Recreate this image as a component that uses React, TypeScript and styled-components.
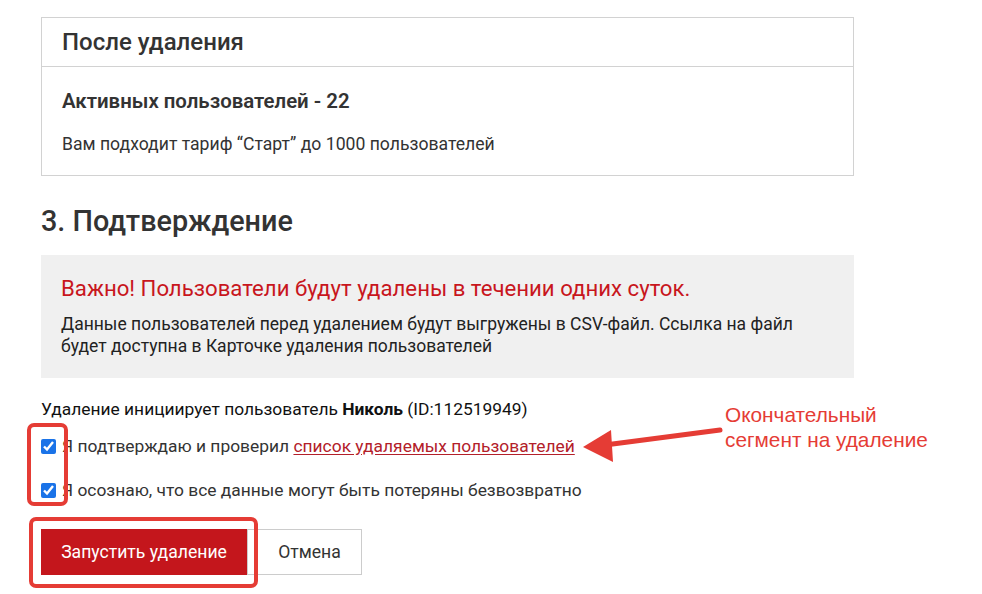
import React from "react";
import styled, { createGlobalStyle } from "styled-components";

const Global = createGlobalStyle`
  html, body { margin: 0; padding: 0; background: #fff; }
  body { font-family: Roboto, "Noto Sans", Arial, sans-serif; color: #333; }
  * { box-sizing: border-box; }
`;

const Page = styled.div`
  position: relative;
  width: 982px;
  height: 594px;
  overflow: hidden;
  padding: 17px 0 0 41px;
`;

const Content = styled.div`
  width: 813px;
  display: flex;
  flex-direction: column;
`;

const Card = styled.section`
  border: 1px solid #d2d2d2;
  display: flex;
  flex-direction: column;
`;

const CardHeader = styled.div`
  height: 49px;
  padding: 0 20px;
  display: flex;
  align-items: center;
  border-bottom: 1px solid #d2d2d2;
  font-size: 24px;
  font-weight: 500;
  color: #333;
`;

const CardBody = styled.div`
  padding: 22px 20px 20px;
  display: flex;
  flex-direction: column;
  gap: 20px;
`;

const CardTitle = styled.div`
  font-size: 20.4px;
  line-height: 24px;
  font-weight: 600;
  color: #333;
`;

const CardText = styled.div`
  font-size: 17.6px;
  line-height: 22px;
  color: #333;
`;

const SectionTitle = styled.h2`
  margin: 29px 0 0;
  font-size: 28.8px;
  line-height: 32px;
  font-weight: 500;
  color: #333;
`;

const Notice = styled.div`
  margin-top: 18px;
  background: #f0f0f0;
  padding: 19px 20px 21px;
  display: flex;
  flex-direction: column;
  gap: 11px;
`;

const NoticeTitle = styled.div`
  font-size: 22.2px;
  line-height: 28px;
  color: #c8161d;
`;

const NoticeText = styled.div`
  font-size: 17.5px;
  line-height: 22px;
  color: #222;
`;

const Initiator = styled.div`
  margin-top: 20px;
  font-size: 17.4px;
  line-height: 22px;
  color: #111;
  b { font-weight: 700; }
`;

const Checks = styled.div`
  margin-top: 15px;
  display: flex;
  flex-direction: column;
  gap: 22px;
`;

const CheckRow = styled.label`
  display: flex;
  align-items: center;
  gap: 6px;
  height: 22px;
  font-size: 17.4px;
  color: #333;
`;

const Box = styled.input`
  width: 15px;
  height: 15px;
  margin: 0;
  accent-color: #1a73e8;
`;

const Link = styled.a`
  color: #b3202a;
  text-decoration: underline;
  text-underline-offset: 2px;
`;

const Buttons = styled.div`
  margin-top: 28px;
  display: flex;
`;

const Button = styled.button<{ $primary?: boolean }>`
  height: 46px;
  width: ${(p) => (p.$primary ? "206px" : "115px")};
  padding: ${(p) => (p.$primary ? "0" : "0 0 0 10px")};
  font-family: Roboto, Arial, sans-serif;
  font-size: 17.6px;
  border: ${(p) => (p.$primary ? "none" : "1px solid #cccccc")};
  background: ${(p) => (p.$primary ? "#c4161c" : "#fff")};
  color: ${(p) => (p.$primary ? "#fff" : "#333")};
  cursor: pointer;
`;

const Highlight = styled.div<{ $x: number; $y: number; $w: number; $h: number }>`
  position: absolute;
  left: ${(p) => p.$x}px;
  top: ${(p) => p.$y}px;
  width: ${(p) => p.$w}px;
  height: ${(p) => p.$h}px;
  border: 4px solid #e53c35;
  border-radius: 7px;
  pointer-events: none;
`;

const Note = styled.div`
  position: absolute;
  left: 725px;
  top: 402px;
  font-family: "Liberation Sans", Arial, sans-serif;
  font-size: 20.8px;
  line-height: 25px;
  color: #e53c35;
`;

const ArrowSvg = styled.svg`
  position: absolute;
  left: 575px;
  top: 415px;
  pointer-events: none;
`;

export default function App() {
  return (
    <Page>
      <Global />
      <Content>
        <Card>
          <CardHeader>После удаления</CardHeader>
          <CardBody>
            <CardTitle>Активных пользователей - 22</CardTitle>
            <CardText>Вам подходит тариф “Старт” до 1000 пользователей</CardText>
          </CardBody>
        </Card>

        <SectionTitle>3. Подтверждение</SectionTitle>

        <Notice>
          <NoticeTitle>Важно! Пользователи будут удалены в течении одних суток.</NoticeTitle>
          <NoticeText>
            Данные пользователей перед удалением будут выгружены в CSV-файл. Ссылка на файл будет доступна в Карточке удаления пользователей
          </NoticeText>
        </Notice>

        <Initiator>
          Удаление инициирует пользователь <b>Николь</b> (ID:112519949)
        </Initiator>

        <Checks>
          <CheckRow>
            <Box type="checkbox" defaultChecked />
            <span>
              Я подтверждаю и проверил <Link href="#">список удаляемых пользователей</Link>
            </span>
          </CheckRow>
          <CheckRow>
            <Box type="checkbox" defaultChecked />
            <span>Я осознаю, что все данные могут быть потеряны безвозвратно</span>
          </CheckRow>
        </Checks>

        <Buttons>
          <Button $primary>Запустить удаление</Button>
          <Button>Отмена</Button>
        </Buttons>
      </Content>

      <Highlight $x={27} $y={423} $w={41} $h={83} />
      <Highlight $x={29} $y={517} $w={229} $h={71} />

      <ArrowSvg width="150" height="50" viewBox="0 0 150 50">
        <line x1="145" y1="15" x2="30" y2="30" stroke="#e53c35" strokeWidth="5" strokeLinecap="round" />
        <polygon points="8,32 36,15 38,47" fill="#e53c35" />
      </ArrowSvg>

      <Note>
        Окончательный
        <br />
        сегмент на удаление
      </Note>
    </Page>
  );
}
